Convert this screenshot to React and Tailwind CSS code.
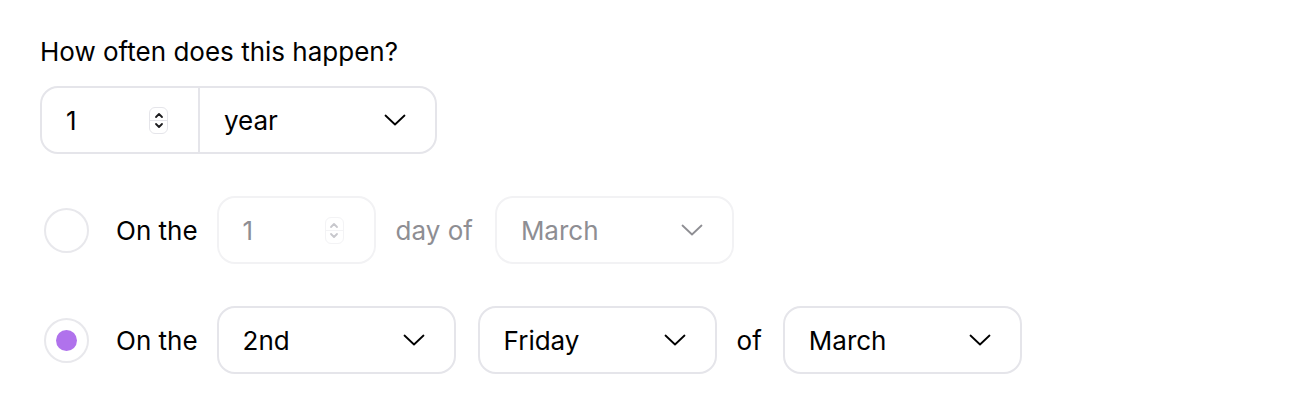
const font = { fontFamily: 'Inter, "Noto Sans", sans-serif' };

const Chevron = ({ className = '' }) => (
  <svg width="22" height="12" viewBox="0 0 22 12" fill="none" stroke="currentColor" strokeWidth="1.8" strokeLinecap="round" strokeLinejoin="round" className={className}>
    <path d="M1.5 1.5L11 10.5L20.5 1.5" />
  </svg>
);

const Stepper = ({ disabled }) => (
  <div
    className={`flex h-[27px] w-[19px] flex-col items-center justify-center rounded-[6px] border ${
      disabled ? 'border-[#f3f3f5] text-[#c7c7cc]' : 'border-[#e5e5ea] text-[#1c1c1e]'
    }`}
  >
    <svg width="10" height="7" viewBox="0 0 10 7" fill="none" stroke="currentColor" strokeWidth="1.8" strokeLinecap="round" strokeLinejoin="round">
      <path d="M2 5L5 2L8 5" />
    </svg>
    <div className={`my-[1px] h-px w-full ${disabled ? 'bg-[#f3f3f5]' : 'bg-[#e5e5ea]'}`} />
    <svg width="10" height="7" viewBox="0 0 10 7" fill="none" stroke="currentColor" strokeWidth="1.8" strokeLinecap="round" strokeLinejoin="round">
      <path d="M2 2L5 5L8 2" />
    </svg>
  </div>
);

const Select = ({ value, disabled }) => (
  <div
    className={`flex h-[68px] w-[239px] items-center justify-between rounded-[18px] border-2 pl-[24px] pr-[29px] ${
      disabled ? 'border-[#f2f2f4] text-[#8e8e93]' : 'border-[#e5e5ea] text-black'
    }`}
  >
    <span>{value}</span>
    <Chevron className={disabled ? 'text-[#8e8e93]' : 'text-black'} />
  </div>
);

const Radio = ({ checked }) => (
  <div className="flex h-[45px] w-[45px] items-center justify-center rounded-full border-2 border-[#e8e8ec] bg-white">
    {checked && <div className="h-[21px] w-[21px] rounded-full bg-[#b072ec]" />}
  </div>
);

export default function App() {
  return (
    <div className="min-h-screen bg-white px-[40px] pt-[34px] text-[26px] text-black" style={font}>
      <p className="leading-[36px]">How often does this happen?</p>

      {/* interval */}
      <div className="mt-[16px] flex h-[68px] w-[397px] rounded-[18px] border-2 border-[#e5e5ea]">
        <div className="flex w-[158px] items-center justify-between border-r-2 border-[#e5e5ea] pl-[24px] pr-[30px]">
          <span>1</span>
          <Stepper />
        </div>
        <div className="flex flex-1 items-center justify-between pl-[24px] pr-[29px]">
          <span>year</span>
          <Chevron />
        </div>
      </div>

      <div className="mt-[42px] flex flex-col gap-[42px]">
        <div className="flex items-center">
          <div className="ml-[4px]">
            <Radio />
          </div>
          <span className="ml-[27px]">On the</span>
          <div className="ml-[19px] flex h-[68px] w-[159px] items-center justify-between rounded-[18px] border-2 border-[#f2f2f4] pl-[24px] pr-[30px] text-[#8e8e93]">
            <span>1</span>
            <Stepper disabled />
          </div>
          <span className="ml-[20px] text-[#8e8e93]">day of</span>
          <div className="ml-[22px]">
            <Select value="March" disabled />
          </div>
        </div>

        <div className="flex items-center">
          <div className="ml-[4px]">
            <Radio checked />
          </div>
          <span className="ml-[27px]">On the</span>
          <div className="ml-[19px]">
            <Select value="2nd" />
          </div>
          <div className="ml-[22px]">
            <Select value="Friday" />
          </div>
          <span className="ml-[20px]">of</span>
          <div className="ml-[21px]">
            <Select value="March" />
          </div>
        </div>
      </div>
    </div>
  );
}
